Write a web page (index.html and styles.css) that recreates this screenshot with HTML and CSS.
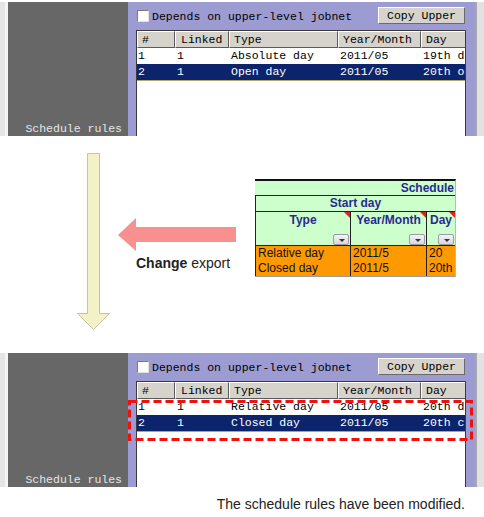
FILE: index.html
```html
<!DOCTYPE html>
<html>
<head>
<meta charset="utf-8">
<link rel="stylesheet" href="styles.css">
</head>
<body>
<div class="panel panel-top">
  <div class="strip"></div>
  <div class="nav"><span>Schedule rules</span></div>
  <div class="main">
    <div class="toolbar">
      <div class="chk"><span class="box"></span><span>Depends on upper-level jobnet</span></div>
      <div class="btn">Copy Upper</div>
    </div>
    <div class="list">
      <div class="row head"><div>#</div><div>Linked</div><div>Type</div><div>Year/Month</div><div>Day</div></div>
      <div class="row"><div>1</div><div>1</div><div>Absolute day</div><div>2011/05</div><div>19th day</div></div>
      <div class="row sel"><div>2</div><div>1</div><div>Open day</div><div>2011/05</div><div>20th open day</div></div>
    </div>
  </div>
  <div class="edge"></div>
</div>

<div class="middle">
  <svg class="down" width="34" height="178" viewBox="0 0 34 178">
    <path d="M10.5 0.5 H22.5 V160.5 H32.5 L16.5 176.5 L0.5 160.5 H10.5 Z" fill="#f2f2c6" stroke="#c4c4a8" stroke-width="1"/>
  </svg>
  <div class="change">
    <svg class="left" width="118" height="34" viewBox="0 0 118 34">
      <path d="M0 17 L18 0 V9 H118 V24 H18 V33 Z" fill="#f99090"/>
    </svg>
    <div class="change-label"><b>Change</b> export</div>
  </div>
  <div class="sheet">
    <div class="s-title">Schedule</div>
    <div class="s-sub">Start day</div>
    <div class="s-grid s-head">
      <div class="s-cell"><span>Type</span><i class="tri"></i><i class="flt"></i></div>
      <div class="s-cell"><span>Year/Month</span><i class="tri"></i><i class="flt"></i></div>
      <div class="s-cell"><span>Day</span><i class="tri"></i><i class="flt"></i></div>
    </div>
    <div class="s-grid s-body">
      <div class="s-cell">Relative day<br>Closed day</div>
      <div class="s-cell">2011/5<br>2011/5</div>
      <div class="s-cell">20<br>20th</div>
    </div>
  </div>
</div>

<div class="panel panel-bottom">
  <div class="strip"></div>
  <div class="nav"><span>Schedule rules</span></div>
  <div class="main">
    <div class="toolbar">
      <div class="chk"><span class="box"></span><span>Depends on upper-level jobnet</span></div>
      <div class="btn">Copy Upper</div>
    </div>
    <div class="list">
      <div class="row head"><div>#</div><div>Linked</div><div>Type</div><div>Year/Month</div><div>Day</div></div>
      <div class="row"><div>1</div><div>1</div><div>Relative day</div><div>2011/05</div><div>20th day</div></div>
      <div class="row sel"><div>2</div><div>1</div><div>Closed day</div><div>2011/05</div><div>20th closed day</div></div>
    </div>
  </div>
  <div class="edge"></div>
  <svg class="dash" width="345" height="41" viewBox="0 0 345 41">
    <rect x="1.5" y="1.5" width="342" height="38" fill="none" stroke="#f01010" stroke-width="3" stroke-dasharray="8 4"/>
  </svg>
</div>

<div class="caption">The schedule rules have been modified.</div>
</body>
</html>
```

FILE: styles.css
```css
* { box-sizing: border-box; }
html, body { margin: 0; padding: 0; background: #ffffff; }
body { width: 484px; height: 517px; overflow: hidden; font-family: "Liberation Sans", Arial, sans-serif; }

.panel {
  display: flex;
  height: 134px;
  font-family: "Liberation Mono", "Courier New", monospace;
  font-size: 11.5px;
  color: #000;
}
.panel-top { margin-top: 2px; }
.panel-bottom { position: relative; margin-top: 0; }

.strip { width: 8px; background: linear-gradient(90deg, #e4e4e4 0, #e4e4e4 5px, #f4f4f4 5px); }
.nav {
  width: 120px;
  background: #676767;
  display: flex;
  align-items: flex-end;
  justify-content: flex-end;
  padding: 0 6px 1px 0;
  color: #e6e6e6;
}
.main {
  width: 347px;
  background: #9c9cd2;
  padding: 5px 9px 0 8px;
  display: flex;
  flex-direction: column;
}
.edge { flex: 1; background: linear-gradient(90deg, #a8a8a8 0, #a8a8a8 2px, #e2e2e2 2px); }

.toolbar {
  height: 20px;
  margin-bottom: 3px;
  display: flex;
  justify-content: space-between;
  align-items: flex-start;
  padding: 0 1px 0 1px;
}
.chk { display: flex; align-items: center; height: 16px; margin-top: 1px; }
.box {
  width: 12px; height: 12px;
  background: #fff;
  border: 1px solid #7a7a7a;
  border-right-color: #e0e0e0;
  border-bottom-color: #e0e0e0;
  margin-right: 3px;
}
.btn {
  width: 87px; height: 17px;
  background: #d6d3cc;
  border: 1px solid #fff;
  border-right-color: #6a6a6a;
  border-bottom-color: #6a6a6a;
  text-align: center;
  line-height: 15px;
}

.list {
  flex: 1;
  width: 330px;
  background: #fff;
  border: 1px solid #3a3a3a;
  border-bottom: none;
  overflow: hidden;
}
.row {
  display: grid;
  grid-template-columns: 38px 54px 109px 83px 45px;
  height: 16px;
  line-height: 16px;
  white-space: nowrap;
}
.row > div { overflow: hidden; padding-left: 1px; }
.row > div:nth-child(2) { padding-left: 2px; }
.row > div:nth-child(3), .row > div:nth-child(4), .row > div:nth-child(5) { padding-left: 2px; }
.row.head { height: 17px; line-height: 15px; }
.row.head > div {
  background: #d6d3cc;
  border: 1px solid #fff;
  border-right-color: #5a5a5a;
  border-bottom-color: #5a5a5a;
  padding-left: 4px;
}
.row.head > div:nth-child(2) { padding-left: 5px; }
.row.sel { background: #0c246c; color: #fff; border-bottom: 1px solid #b9a46a; height: 17px; line-height: 15px; }

.middle { display: flex; align-items: flex-start; height: 217px; }
.down { margin: 17px 0 0 77px; flex: none; }
.change { margin: 82px 0 0 7px; width: 118px; flex: none; }
.left { display: block; }
.change-label { margin-top: 3px; padding-left: 18px; font-size: 14px; line-height: 16px; color: #222; white-space: nowrap; }
.change-label b { font-weight: bold; }

.sheet {
  margin: 43px 0 0 19px;
  width: 201px;
  border-top: 2px solid #111;
  border-right: 1px solid #b8b8b8;
  font-family: "Liberation Sans", Arial, sans-serif;
  font-size: 12px;
  flex: none;
}
.s-title {
  height: 15px; line-height: 15px;
  background: #ccffcc;
  text-align: right;
  font-weight: bold;
  color: #2a2a8c;
  padding-right: 1px;
  border-bottom: 1px solid #222;
}
.s-sub {
  height: 16px; line-height: 15px;
  background: #ccffcc;
  text-align: center;
  font-weight: bold;
  color: #2a2a8c;
  border-left: 1px solid #222;
  border-bottom: 1px solid #222;
}
.s-grid { display: grid; grid-template-columns: 95px 76px 29px; }
.s-head { height: 34px; border-bottom: 1px solid #222; background: #ccffcc; }
.s-head .s-cell {
  position: relative;
  text-align: center;
  font-weight: bold;
  color: #2a2a8c;
  line-height: 15px;
  padding-top: 1px;
  white-space: nowrap;
}
.s-cell { border-left: 1px solid #222; overflow: hidden; }
.tri {
  position: absolute; top: 0; right: 0;
  width: 0; height: 0;
  border-top: 6px solid #e02020;
  border-left: 6px solid transparent;
}
.flt {
  position: absolute; right: 1px; bottom: 0;
  width: 16px; height: 11px;
  background: linear-gradient(#f4f4f4, #d8d8e0);
  border: 1px solid #9a9aa8;
  border-radius: 2px;
}
.flt::after {
  content: "";
  position: absolute; left: 5px; top: 4px;
  border-top: 3px solid #333;
  border-left: 3px solid transparent;
  border-right: 3px solid transparent;
}
.s-body { background: #ff9900; height: 31px; border-bottom: 1px solid #9a9a9a; }
.s-body .s-cell { line-height: 15px; padding-left: 2px; color: #111; white-space: nowrap; }

.dash { position: absolute; left: 128px; top: 47px; }

.caption {
  margin-top: 9px;
  text-align: right;
  padding-right: 19px;
  font-size: 14px;
  line-height: 16px;
  color: #222;
}
```
